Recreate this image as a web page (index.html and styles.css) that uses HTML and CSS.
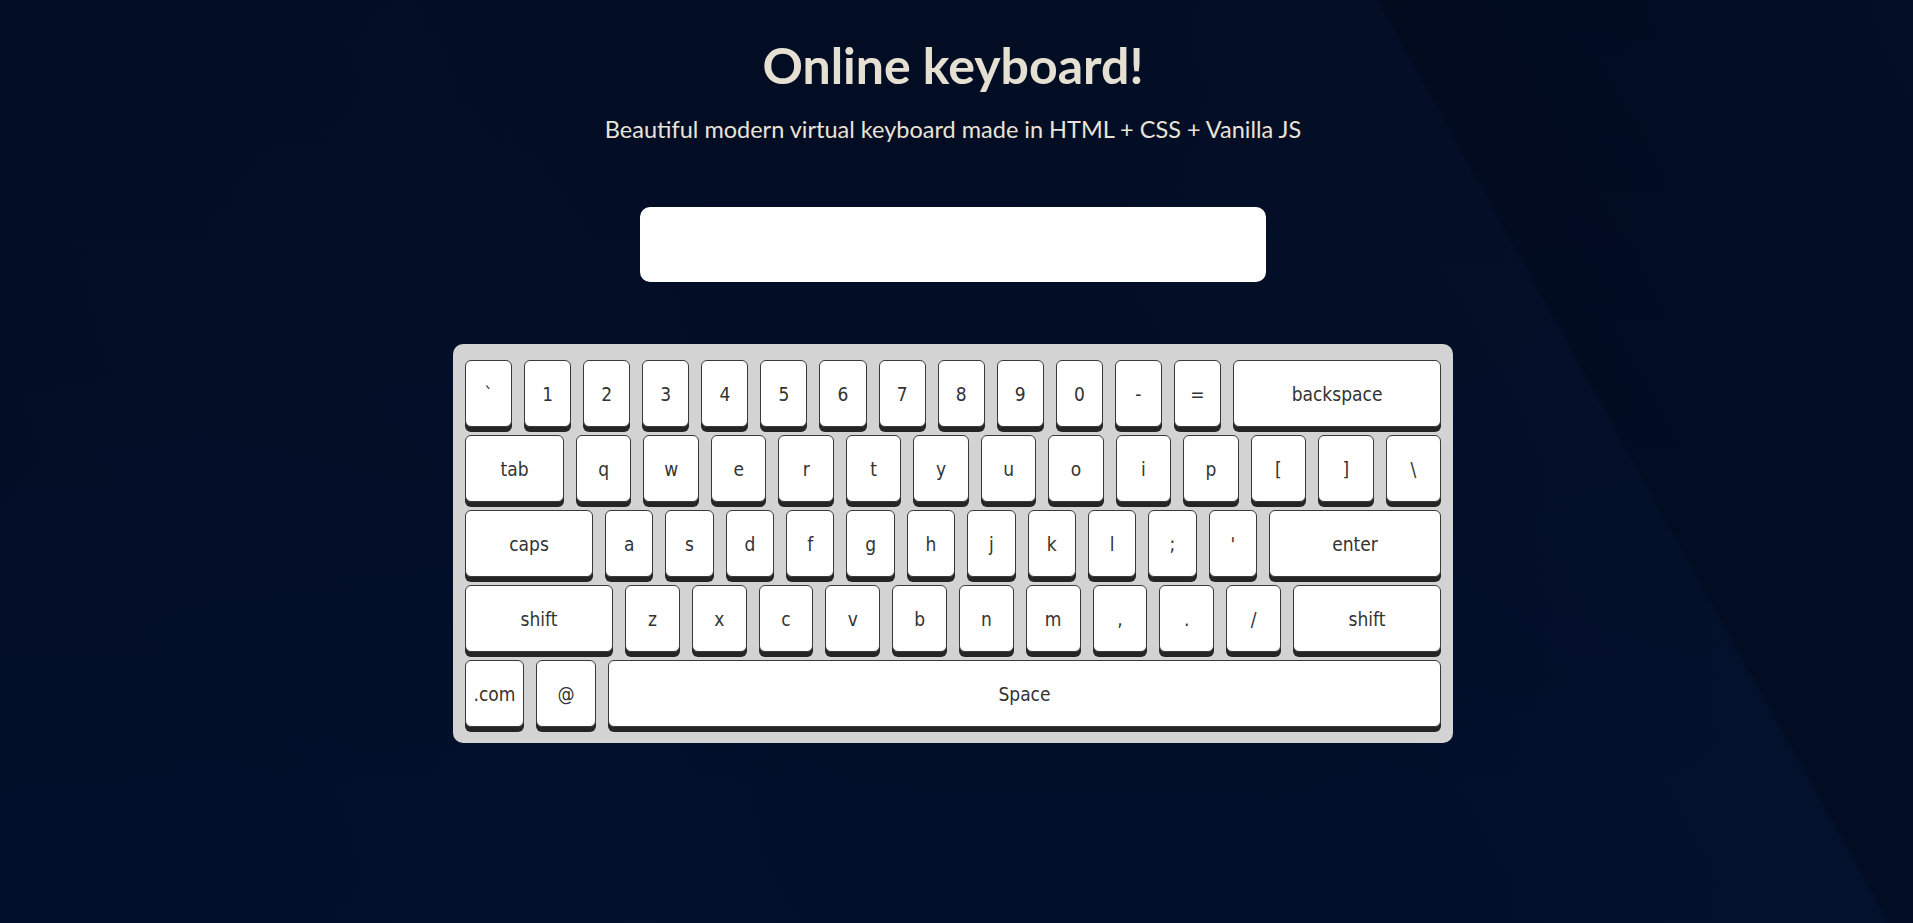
FILE: index.html
```html
<!DOCTYPE html>
<html lang="en">
<head>
<meta charset="utf-8">
<title>Online keyboard!</title>
<link rel="stylesheet" href="styles.css">
</head>
<body>
<main class="page">
  <h1 class="title">Online keyboard!</h1>
  <p class="subtitle">Beautiful modern virtual keyboard made in HTML + CSS + Vanilla JS</p>
  <div class="output"></div>
  <div class="keyboard">
    <div class="row">
      <div class="key">`</div><div class="key">1</div><div class="key">2</div><div class="key">3</div><div class="key">4</div><div class="key">5</div><div class="key">6</div><div class="key">7</div><div class="key">8</div><div class="key">9</div><div class="key">0</div><div class="key">-</div><div class="key">=</div><div class="key key-backspace">backspace</div>
    </div>
    <div class="row">
      <div class="key key-tab">tab</div><div class="key">q</div><div class="key">w</div><div class="key">e</div><div class="key">r</div><div class="key">t</div><div class="key">y</div><div class="key">u</div><div class="key">o</div><div class="key">i</div><div class="key">p</div><div class="key">[</div><div class="key">]</div><div class="key">\</div>
    </div>
    <div class="row">
      <div class="key key-caps">caps</div><div class="key">a</div><div class="key">s</div><div class="key">d</div><div class="key">f</div><div class="key">g</div><div class="key">h</div><div class="key">j</div><div class="key">k</div><div class="key">l</div><div class="key">;</div><div class="key">'</div><div class="key key-enter">enter</div>
    </div>
    <div class="row">
      <div class="key key-shift">shift</div><div class="key">z</div><div class="key">x</div><div class="key">c</div><div class="key">v</div><div class="key">b</div><div class="key">n</div><div class="key">m</div><div class="key">,</div><div class="key">.</div><div class="key">/</div><div class="key key-shift">shift</div>
    </div>
    <div class="row">
      <div class="key key-com">.com</div><div class="key key-at">@</div><div class="key key-space">Space</div>
    </div>
  </div>
</main>
</body>
</html>
```
FILE: styles.css
```css
* { box-sizing: border-box; }

html, body {
  margin: 0;
  height: 100%;
}

body {
  background-color: #020e27;
  background-image:
    linear-gradient(61deg, rgba(0,0,0,0) 0%, rgba(0,0,0,0) 55%, rgba(16,32,66,0.10) 77.8%, rgba(0,4,14,0.22) 78%, rgba(0,4,14,0.06) 90%, rgba(14,30,62,0.10) 100%),
    linear-gradient(75deg, rgba(0,0,0,0) 0%, rgba(10,24,54,0.12) 30%, rgba(0,0,0,0) 45%),
    linear-gradient(180deg, #020d23 0%, #020f2a 100%);
  font-family: "Lato", "Open Sans", sans-serif;
  overflow: hidden;
}

.page {
  display: flex;
  flex-direction: column;
  align-items: center;
  padding: 39px 7px 0 0;
}

.title {
  margin: 0;
  font-family: "Lato", sans-serif;
  font-weight: 700;
  font-size: 50px;
  line-height: 53px;
  color: #e6e0d3;
}

.subtitle {
  margin: 23px 0 0;
  font-family: "Lato", sans-serif;
  font-weight: 400;
  font-size: 23.5px;
  line-height: 29px;
  color: #e9e3d8;
}

.output {
  margin-top: 63px;
  width: 626px;
  height: 75px;
  background: #ffffff;
  border-radius: 10px;
}

.keyboard {
  margin-top: 62px;
  width: 1000px;
  padding: 16px 12px;
  background: #d3d3d3;
  border-radius: 10px;
  display: flex;
  flex-direction: column;
  gap: 8px;
}

.row {
  display: flex;
  gap: 12px;
}

.key {
  flex: 1 1 0;
  height: 67px;
  display: flex;
  align-items: center;
  justify-content: center;
  background: #ffffff;
  border: 1px solid #3a3a3a;
  border-radius: 6px;
  box-shadow: 0 5px 0 #252525;
  font-family: "DejaVu Sans Condensed", "DejaVu Sans", sans-serif;
  font-stretch: condensed;
  font-size: 19px;
  color: #333333;
}

.key-backspace { flex: 0 0 208px; }
.key-tab { flex: 0 0 99px; }
.key-caps { flex: 0 0 128px; }
.key-enter { flex: 0 0 172px; }
.key-shift { flex: 0 0 148px; }
.key-com { flex: 0 0 59px; }
.key-at { flex: 0 0 60px; }
.key-space { flex: 1 1 0; }
```
